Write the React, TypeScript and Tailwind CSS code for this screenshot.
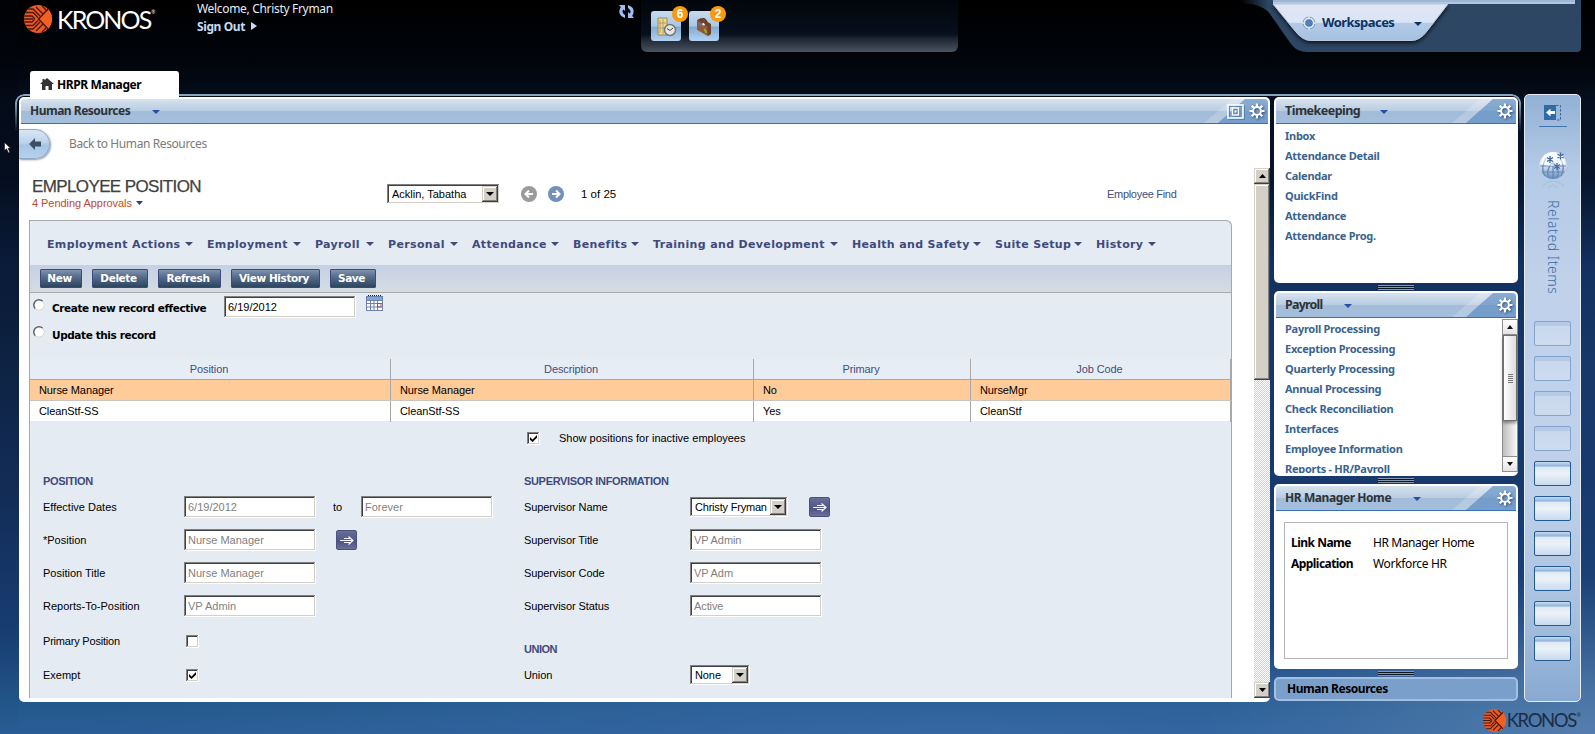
import type { ReactNode } from 'react';

const UI = "font-['Noto_Sans',sans-serif]";

function Caret({ className = '', w = 8, h = 4 }: { className?: string; w?: number; h?: number }) {
  return (
    <svg width={w} height={h} viewBox="0 0 8 4" preserveAspectRatio="none" className={`shrink-0 ${className}`}>
      <path d="M0 0H8L4 4Z" fill="currentColor" />
    </svg>
  );
}

function LogoMark({ size, id }: { size: number; id: string }) {
  return (
    <svg width={size} height={size} viewBox="0 0 28 28" className="shrink-0">
      <defs>
        <clipPath id={id}>
          <circle cx="14" cy="14" r="14" />
        </clipPath>
      </defs>
      <g clipPath={`url(#${id})`}>
        <rect width="28" height="28" fill="#ee5a24" />
        <path
          d="M0 4H9L16 11M0 7.500H9L14 12.500M0 11H8L11 14M0 14H9M0 17H8L11 14M0 20.500H9L14 15.500M0 24H9L16 17M12 2L19 9M12 26L19 19M18 1L22 5M18 27L22 23"
          stroke="#4a180a"
          strokeWidth="1.300"
          fill="none"
        />
        <path d="M14 14L25 3L31 14L25 25Z" fill="#f15f22" />
        <path d="M25 3L14.500 14L25 25" stroke="#4a180a" strokeWidth="1.500" fill="none" />
      </g>
    </svg>
  );
}

function Gear() {
  return (
    <svg width="16" height="16" viewBox="-8 -8 16 16" className="shrink-0 drop-shadow-[1px_1px_1px_rgba(30,60,100,0.8)]">
      <circle r="3.900" fill="none" stroke="#fff" strokeWidth="2" />
      <path
        d="M0 -4.500V-7.500M0 4.500V7.500M-4.500 0H-7.500M4.500 0H7.500M3.200 -3.200L5.300 -5.300M-3.200 3.200L-5.300 5.300M-3.200 -3.200L-5.300 -5.300M3.200 3.200L5.300 5.300"
        stroke="#fff"
        strokeWidth="2.200"
      />
    </svg>
  );
}

function PanelHeader({ title, children }: { title: ReactNode; children: ReactNode }) {
  return (
    <div className="relative mx-[2px] mt-[2px] flex h-[25px] shrink-0 items-center overflow-hidden rounded-t-[4px] border-b border-[#3b70b0] bg-[linear-gradient(180deg,#d6e2ee_0%,#b9cde2_48%,#a2bcd9_52%,#a4bfdc_100%)] pr-[3px]">
      <svg width="66" height="24" className="absolute top-0 right-0">
        <path d="M2 24L30 0H43L16 24Z" fill="#fff" opacity=".2" />
        <path d="M16 24L43 0H66V24Z" fill="#5b8bc0" opacity=".62" />
      </svg>
      <span className={`${UI} relative flex items-center text-[12px] leading-[24px] font-bold whitespace-nowrap text-[#2d3338]`}>
        {title}
      </span>
      <Caret className="relative mt-[2px] text-[#2350a0]" />
      <div className="relative ml-auto flex items-center gap-[5px]">{children}</div>
    </div>
  );
}

const SUNK =
  'bg-white shadow-[inset_-1px_-1px_0_#fff,inset_1px_1px_0_#808080,inset_-2px_-2px_0_#d4d0c8,inset_2px_2px_0_#404040]';
const RAISED =
  'bg-[#d4d0c8] shadow-[inset_-1px_-1px_0_#404040,inset_1px_1px_0_#d4d0c8,inset_-2px_-2px_0_#808080,inset_2px_2px_0_#fff]';

function Field({ value, className = '' }: { value: string; className?: string }) {
  return <div className={`${SUNK} h-[22px] w-[132px] shrink-0 pl-[4px] leading-[22px] ${className}`}>{value}</div>;
}

function Select({ value, className }: { value: string; className: string }) {
  return (
    <div className={`${SUNK} flex h-[20px] shrink-0 items-center p-[2px] pl-[5px] text-black ${className}`}>
      <span className="leading-[20px] whitespace-nowrap">{value}</span>
      <span className={`${RAISED} ml-auto flex h-[16px] w-[16px] shrink-0 items-center justify-center`}>
        <Caret />
      </span>
    </div>
  );
}

function Check({ on }: { on?: boolean }) {
  return (
    <span className={`${SUNK} flex h-[13px] w-[13px] shrink-0 items-center justify-center`}>
      {on && (
        <svg width="7" height="7" viewBox="0 0 7 7">
          <path d="M0 2L2.500 4.500L7 0V2.800L2.500 7L0 4.800Z" fill="#000" />
        </svg>
      )}
    </span>
  );
}

function Radio() {
  return (
    <svg width="12" height="12" viewBox="0 0 12 12" className="shrink-0">
      <circle cx="6" cy="6" r="5.300" fill="#fff" stroke="#fff" />
      <path d="M2.300 9.700A5.200 5.200 0 0 1 9.700 2.300" fill="none" stroke="#606060" strokeWidth="1.500" />
      <path d="M9.700 2.300A5.200 5.200 0 0 1 2.300 9.700" fill="none" stroke="#d4d0c8" />
    </svg>
  );
}

function GoButton({ className = '' }: { className?: string }) {
  return (
    <span
      className={`flex h-[20px] w-[21px] shrink-0 items-center justify-center rounded-[2px] border border-[#4c5280] bg-[linear-gradient(180deg,#686e99,#4f5582_60%,#6a709a)] ${className}`}
    >
      <svg width="14" height="9" viewBox="0 0 14 9" fill="none" stroke="#f4f6ff" strokeWidth="1.200">
        <path d="M0 4.500H13M4 2.500H10M4 6.500H10M8.500 .5L13 4.500L8.500 8.500" />
      </svg>
    </span>
  );
}

const MENU = [
  { label: 'Employment Actions', w: 'w-[160px]', tw: 'w-[138px]' },
  { label: 'Employment', w: 'w-[108px]', tw: 'w-[86px]' },
  { label: 'Payroll', w: 'w-[73px]', tw: 'w-[51px]' },
  { label: 'Personal', w: 'w-[84px]', tw: 'w-[62px]' },
  { label: 'Attendance', w: 'w-[101px]', tw: 'w-[79px]' },
  { label: 'Benefits', w: 'w-[80px]', tw: 'w-[58px]' },
  { label: 'Training and Development', w: 'w-[199px]', tw: 'w-[177px]' },
  { label: 'Health and Safety', w: 'w-[143px]', tw: 'w-[121px]' },
  { label: 'Suite Setup', w: 'w-[101px]', tw: 'w-[79px]' },
  { label: 'History', w: 'w-[74px]', tw: 'w-[52px]' },
];

const ACTIONS = [
  { label: 'New', w: 'w-[42px]' },
  { label: 'Delete', w: 'w-[56px]' },
  { label: 'Refresh', w: 'w-[63px]' },
  { label: 'View History', w: 'w-[89px]' },
  { label: 'Save', w: 'w-[46px]' },
];

function TopBar() {
  return (
    <header className="flex h-[71px] shrink-0">
      <div className="flex w-[197px] items-start pt-[5px] pl-[24px]">
        <LogoMark size={28} id="mark-top" />
        <div className="ml-[5px] flex items-start font-['Lato',sans-serif] text-white">
          <span className="text-[25px] leading-[28px] tracking-[-1.900px]">KRONOS</span>
          <span className="mt-[3px] ml-[1px] text-[5px] leading-[8px]">®</span>
        </div>
      </div>
      <div className={`${UI} w-[422px] text-[12px]`}>
        <div className="h-[18px] leading-[18px] tracking-[-0.320px] text-[#e6ecf4]">Welcome, Christy Fryman</div>
        <div className="flex h-[18px] items-center leading-[18px] font-bold tracking-[-0.400px] text-[#c6dbf5]">
          Sign Out
          <svg width="6" height="8" className="mb-[2px] ml-[6px]">
            <path d="M0 0L6 4L0 8Z" fill="#c6dbf5" />
          </svg>
        </div>
      </div>
      <div className="w-[22px] pt-[5px]">
        <svg width="15" height="13" viewBox="0 0 15 13">
          <path d="M0 0H6V6L4.300 4.500Q2 7.500 6 10V13Q-2.500 10 1.800 2Z" fill="#9fbdf2" />
          <path d="M15 13H9V7L10.700 8.500Q13 5.500 9 3V0Q17.500 3 13.200 11Z" fill="#9fbdf2" />
        </svg>
      </div>
      <div className="flex h-[52px] w-[317px] gap-[8px] rounded-b-[6px] bg-[linear-gradient(180deg,#02050b_0%,#07101d_66%,#1b2430_74%,#4b5360_100%)] pt-[11px] pl-[10px]">
        <DockIcon count="6">
          <path d="M7 7H16V24H7Z" fill="#e8d9a0" stroke="#a08640" />
          <path d="M9 9V22M12 8V23M8 12H15M8 17H15" stroke="#b89b58" />
          <circle cx="19" cy="19" r="5.500" fill="#e6e6e6" stroke="#777" strokeWidth="1.500" />
          <path d="M16 17.500L19 19.500L22 17" stroke="#444" fill="none" />
        </DockIcon>
        <DockIcon count="2">
          <path d="M8 9L12 7L22 13V23L19.500 25L8 18.500Z" fill="#70402a" />
          <path d="M8 9L18.500 15.500V25L8 18.500Z" fill="#945838" />
          <path d="M13 8.500Q15 6 18 11" stroke="#4a2818" strokeWidth="1.200" fill="none" />
          <path d="M10 12.500L12.500 14" stroke="#3f7ad6" strokeWidth="2.200" />
          <path d="M13.500 12.500L15.500 14" stroke="#fff" strokeWidth="1.800" />
          <path d="M15.500 18L17.500 22" stroke="#79b83a" strokeWidth="1.800" />
        </DockIcon>
      </div>
      <div className="relative ml-auto h-[52px] w-[354px]">
        <svg width="354" height="56" className="absolute inset-0">
          <defs>
            <linearGradient id="ws" x1="0" y1="0" x2="0" y2="1">
              <stop offset="0" stopColor="#dfe5f5" />
              <stop offset=".5" stopColor="#dbe5f5" />
              <stop offset=".53" stopColor="#b2cbe7" />
              <stop offset="1" stopColor="#a5c1e1" />
            </linearGradient>
            <linearGradient id="wsb" x1="0" y1="0" x2="1" y2="0">
              <stop offset="0" stopColor="#2d4663" stopOpacity="0" />
              <stop offset=".08" stopColor="#2d4663" />
            </linearGradient>
            <filter id="sh" x="-10%" y="-20%" width="120%" height="160%">
              <feDropShadow dx="0" dy="2" stdDeviation="2" floodColor="#000" floodOpacity=".75" />
            </filter>
          </defs>
          <path d="M0 0H340V48Q340 52 336 52H66Q56 52 50 44L29 14Q22 4 0 3Z" fill="url(#wsb)" />
          <path d="M32 4H207L186 31Q179 40.500 170 40.500H70Q62 40.500 55 32Z" fill="url(#ws)" stroke="#b7c8de" filter="url(#sh)" />
          <path d="M32 0H334V4H32Z" fill="#9fb7d6" />
          <path d="M32 3H334" stroke="#c7d6ea" />
        </svg>
        <div className="relative flex h-[40px] items-center pt-[5px] pl-[61px]">
          <svg width="14" height="14" viewBox="-7 -7 14 14">
            <circle r="6" fill="#dbe6f3" stroke="#7d96b4" />
            <circle r="3.800" fill="#4f7fb4" />
            <path d="M0 -7V-4.500M0 7V4.500M-7 0H-4.500M7 0H4.500" stroke="#dbe6f3" strokeWidth="1.500" />
          </svg>
          <span className={`${UI} ml-[6px] w-[92px] text-[13px] font-bold tracking-[-0.550px] text-[#0d3263]`}>Workspaces</span>
          <Caret className="mt-[2px] text-[#0d3263]" />
        </div>
      </div>
    </header>
  );
}

function DockIcon({ count, children }: { count: string; children: ReactNode }) {
  return (
    <div className="relative h-[30px] w-[30px] rounded-[3px] bg-[linear-gradient(180deg,#c6dbf0_0%,#a9c7e5_50%,#83abd3_54%,#b4d2f0_100%)]">
      <svg width="30" height="30">{children}</svg>
      <span className="absolute -top-[5px] left-[21px] flex h-[16px] w-[16px] items-center justify-center rounded-full bg-[#f9990f] font-['Liberation_Sans',sans-serif] text-[12px] leading-none font-bold text-white">
        {count}
      </span>
    </div>
  );
}

function ColumnHeads() {
  return (
    <div className="grid h-[21px] grid-cols-[361px_363px_217px_260px] border-b border-[#a8a8a8] bg-[#e6edf5] text-center leading-[20px] tracking-[-0.100px] text-[#444d7c]">
      {['Position', 'Description', 'Primary', 'Job Code'].map((h) => (
        <div key={h} className="border-r border-[#a8a8a8] pr-[2px]">
          {h}
        </div>
      ))}
    </div>
  );
}

function Row({ cells, className }: { cells: string[]; className: string }) {
  return (
    <div className={`grid grid-cols-[361px_363px_217px_260px] tracking-[-0.100px] text-black ${className}`}>
      {cells.map((c, i) => (
        <div key={i} className="border-r border-[#a8a8a8] pl-[9px]">
          {c}
        </div>
      ))}
    </div>
  );
}

function FormRow({ label, lw, children }: { label: string; lw: string; children?: ReactNode }) {
  return (
    <div className="flex h-[33px] items-start pt-[5px] text-[#7f7f7f]">
      <span className={`${lw} leading-[22px] text-black`}>{label}</span>
      {children}
    </div>
  );
}

function MainPanel() {
  return (
    <section className="mt-[3px] ml-[4px] flex h-[605px] w-[1251px] shrink-0 flex-col overflow-hidden rounded-[5px] bg-white">
      <PanelHeader title={<span className="w-[131px] pl-[9px] tracking-[-0.500px]">Human Resources</span>}>
        <svg width="17" height="15" viewBox="0 0 17 15" fill="none" stroke="#fff" className="drop-shadow-[1px_1px_0_#4f79a8]">
          <rect x="1" y="1" width="15" height="13" strokeWidth="1.600" />
          <rect x="5.500" y="4" width="6" height="7" strokeWidth="1.400" />
          <rect x="7.500" y="6.500" width="2" height="2" fill="#fff" stroke="none" />
        </svg>
        <Gear />
      </PanelHeader>
      <div className="flex h-[39px] shrink-0 items-start pt-[5px]">
        <div className="flex h-[30px] w-[31px] items-center rounded-r-full border border-l-0 border-[#8fa9c6] bg-[linear-gradient(180deg,#d9e6f3,#bcd3eb_45%,#a6c5e6_55%,#b7d1ec)] pl-[10px] shadow-[1px_1px_2px_rgba(60,80,110,0.6)]">
          <svg width="12" height="12" viewBox="0 0 12 12">
            <path d="M0 6L6 0V3.500H12V8.500H6V12Z" fill="#3b5068" />
          </svg>
        </div>
        <span className={`${UI} ml-[19px] text-[12px] leading-[30px] tracking-[-0.400px] text-[#7b7b7b]`}>Back to Human Resources</span>
      </div>
      <div className="flex h-[535px] shrink-0">
        <div className="w-[1235px] pl-[10px] font-['Liberation_Sans',sans-serif] text-[11px]">
          <div className="flex h-[57px] pl-[3px]">
            <div className="w-[355px] pt-[14px]">
              <div className="text-[17px] leading-[20px] tracking-[-0.620px] text-[#414141] [-webkit-text-stroke:0.250px_#414141]">EMPLOYEE POSITION</div>
              <div className="flex h-[12px] items-center leading-[12px] text-[#c04a2c]">
                <span className="w-[104px] text-[11px] tracking-[-0.050px] whitespace-nowrap">4 Pending Approvals</span>
                <Caret w={7} className="text-[#2f3f73]" />
              </div>
            </div>
            <div className="mt-[21px] flex h-[20px] w-[720px] items-center text-black">
              <Select value="Acklin, Tabatha" className="w-[113px]" />
              <CircleArrow className="ml-[21px] text-[#9b9b9b]" />
              <CircleArrow className="ml-[11px] rotate-180 text-[#7191b8]" />
              <span className="ml-[17px] pt-[1px] text-[11.500px]">1 of 25</span>
            </div>
            <div className="mt-[21px] leading-[20px] tracking-[-0.300px] text-[#444d7c]">Employee Find</div>
          </div>
          <div className="flex h-[478px] w-[1203px] flex-col overflow-hidden rounded-tr-[6px] border border-b-0 border-[#a8a8a8] bg-[#e4ebf3]">
            <nav className="flex h-[44px] shrink-0 items-center pt-[4px] pl-[17px] font-['DejaVu_Sans',sans-serif] text-[11px] font-bold tracking-[0.350px] text-[#3f4a7c]">
              {MENU.map((m) => (
                <div key={m.label} className={`flex items-center whitespace-nowrap ${m.w}`}>
                  <span className={m.tw}>{m.label}</span>
                  <Caret className="mb-[2px]" />
                </div>
              ))}
            </nav>
            <div className="flex h-[28px] shrink-0 gap-[10px] border-b border-[#a8a8a8] bg-[linear-gradient(180deg,#c5d0e4,#d5dce2)] pt-[4px] pl-[10px]">
              {ACTIONS.map((a) => (
                <div
                  key={a.label}
                  className={`flex h-[19px] items-center justify-center rounded-[1px] border border-[#3c4a7a] bg-[linear-gradient(180deg,#7f93ad_0%,#5a7190_35%,#2c4560_100%)] pr-[3px] font-['DejaVu_Sans',sans-serif] text-[10.500px] font-bold tracking-[-0.400px] whitespace-nowrap text-white ${a.w}`}
                >
                  {a.label}
                </div>
              ))}
            </div>
            <div className="h-[66px] shrink-0 font-['DejaVu_Sans',sans-serif] text-[10.500px] font-bold tracking-[-0.400px] text-black">
              <div className="flex h-[27px] items-start pl-[3px]">
                <div className="pt-[6px]">
                  <Radio />
                </div>
                <span className="ml-[7px] w-[172px] pt-[5px] leading-[20px]">Create new record effective</span>
                <Field value="6/19/2012" className="mt-[3px] font-['Liberation_Sans',sans-serif] text-[11px] font-normal tracking-normal" />
                <svg width="17" height="16" viewBox="0 0 17 16" className="mt-[2px] ml-[10px]">
                  <rect x="0.500" y="1.500" width="16" height="14" fill="#fff" stroke="#6b7fae" />
                  <path d="M1 2H16V5H1Z" fill="#7fa6d8" />
                  <path d="M2 .5H16" stroke="#222" strokeDasharray="1 1" />
                  <path d="M1 5.500H16M1 8.500H16M1 12H16M4.500 5V15M8 5V15M11.500 5V15" stroke="#6f83b0" />
                  <path d="M11.500 8.500H15V12H11.500Z" fill="none" stroke="#b5483c" />
                </svg>
              </div>
              <div className="flex h-[27px] items-start pl-[3px]">
                <div className="pt-[6px]">
                  <Radio />
                </div>
                <span className="ml-[7px] pt-[5px] leading-[20px]">Update this record</span>
              </div>
            </div>
            <div className="shrink-0">
              <ColumnHeads />
              <Row className="h-[21px] border-b border-[#c9c4bd] bg-[#ffcb99] leading-[20px]" cells={['Nurse Manager', 'Nurse Manager', 'No', 'NurseMgr']} />
              <Row className="h-[20px] bg-white leading-[21px]" cells={['CleanStf-SS', 'CleanStf-SS', 'Yes', 'CleanStf']} />
            </div>
            <div className="flex h-[50px] shrink-0 items-start pt-[11px] pl-[497px] leading-[13px] text-black">
              <Check on />
              <span className="ml-[19px]">Show positions for inactive employees</span>
            </div>
            <div className="flex shrink-0 pl-[13px]">
              <div className="w-[481px]">
                <h3 className="h-[20px] leading-[21px] font-bold tracking-[-0.330px] text-[#3f4a7c]">POSITION</h3>
                <FormRow label="Effective Dates" lw="w-[141px]">
                  <Field value="6/19/2012" />
                  <span className="w-[45px] pl-[17px] leading-[22px] text-black">to</span>
                  <Field value="Forever" />
                </FormRow>
                <FormRow label="*Position" lw="w-[141px]">
                  <Field value="Nurse Manager" />
                  <GoButton className="mt-[1px] ml-[20px]" />
                </FormRow>
                <FormRow label="Position Title" lw="w-[141px]">
                  <Field value="Nurse Manager" />
                </FormRow>
                <FormRow label="Reports-To-Position" lw="w-[141px]">
                  <Field value="VP Admin" />
                </FormRow>
                <div className="flex h-[36px] items-center">
                  <span className="w-[143px] tracking-[-0.200px] text-black">Primary Position</span>
                  <Check />
                </div>
                <div className="flex h-[32px] items-center">
                  <span className="w-[143px] text-black">Exempt</span>
                  <Check on />
                </div>
              </div>
              <div className="tracking-[-0.100px]">
                <h3 className="h-[20px] leading-[21px] font-bold tracking-[-0.330px] text-[#3f4a7c]">SUPERVISOR INFORMATION</h3>
                <FormRow label="Supervisor Name" lw="w-[166px]">
                  <Select value="Christy Fryman" className="mt-[1px] w-[98px] tracking-[-0.200px]" />
                  <GoButton className="mt-[1px] ml-[21px]" />
                </FormRow>
                <FormRow label="Supervisor Title" lw="w-[166px]">
                  <Field value="VP Admin" />
                </FormRow>
                <FormRow label="Supervisor Code" lw="w-[166px]">
                  <Field value="VP Adm" />
                </FormRow>
                <FormRow label="Supervisor Status" lw="w-[166px]">
                  <Field value="Active" />
                </FormRow>
                <h3 className="h-[36px] pt-[16px] leading-[20px] font-bold tracking-[-0.500px] text-[#3f4a7c]">UNION</h3>
                <div className="flex h-[32px] items-center">
                  <span className="w-[166px] text-black">Union</span>
                  <Select value="None" className="w-[60px]" />
                </div>
              </div>
            </div>
          </div>
        </div>
        <div className="mt-[5px] flex h-[530px] w-[16px] flex-col bg-[repeating-conic-gradient(#d4d0c8_0_25%,#ffffff_0_50%)] bg-[length:2px_2px] text-black">
          <span className={`${RAISED} flex h-[16px] items-center justify-center`}>
            <Caret w={7} className="rotate-180" />
          </span>
          <span className={`${RAISED} h-[196px]`} />
          <span className={`${RAISED} mt-auto flex h-[16px] items-center justify-center`}>
            <Caret w={7} />
          </span>
        </div>
      </div>
    </section>
  );
}

function CircleArrow({ className }: { className: string }) {
  return (
    <svg width="16" height="16" viewBox="0 0 16 16" className={className}>
      <circle cx="8" cy="8" r="8" fill="currentColor" />
      <path d="M12 8H5M8 4.500L4.500 8L8 11.500" stroke="#fff" strokeWidth="2" fill="none" />
    </svg>
  );
}

function Grip() {
  return (
    <div className="mx-auto mt-[2px] mb-[1px] h-[5px] w-[36px] shrink-0 bg-[linear-gradient(180deg,#8a98ac_0_1px,#0c1524_1px_2px,#8a98ac_2px_3px,#0c1524_3px_4px,#8a98ac_4px_5px)]" />
  );
}

function Links({ items }: { items: string[] }) {
  return (
    <ul className={`${UI} pl-[11px] text-[11px] font-bold tracking-[-0.270px] text-[#39648f]`}>
      {items.map((i) => (
        <li key={i} className="h-[20px] leading-[20px] whitespace-nowrap">
          {i}
        </li>
      ))}
    </ul>
  );
}

function SidePanels() {
  return (
    <aside className="mt-[3px] ml-[4px] flex h-[605px] w-[244px] flex-col">
      <section className="h-[186px] shrink-0 overflow-hidden rounded-[5px] bg-white">
        <PanelHeader title={<span className="w-[104px] pl-[9px] text-[12.500px] tracking-[-0.520px]">Timekeeping</span>}>
          <Gear />
        </PanelHeader>
        <div className="pt-[2px]">
          <Links items={['Inbox', 'Attendance Detail', 'Calendar', 'QuickFind', 'Attendance', 'Attendance Prog.']} />
        </div>
      </section>
      <Grip />
      <section className="h-[185px] shrink-0 overflow-hidden rounded-[5px] bg-white">
        <PanelHeader title={<span className="w-[68px] pl-[9px] text-[12.500px] tracking-[-0.800px]">Payroll</span>}>
          <Gear />
        </PanelHeader>
        <div className="flex h-[155px] overflow-hidden pt-[1px]">
          <div className="h-[154px] w-[228px] overflow-hidden">
            <Links
              items={[
                'Payroll Processing',
                'Exception Processing',
                'Quarterly Processing',
                'Annual Processing',
                'Check Reconciliation',
                'Interfaces',
                'Employee Information',
                'Reports - HR/Payroll',
              ]}
            />
          </div>
          <div className="flex h-[153px] w-[16px] flex-col border border-[#8e8e8e] bg-[linear-gradient(90deg,#bdbdbd,#fafafa)] text-[#111]">
            <span className="flex h-[15px] items-center justify-center border-b border-[#8e8e8e] bg-[linear-gradient(180deg,#fff,#e4e4e4)]">
              <Caret w={6} className="rotate-180" />
            </span>
            <span className="flex h-[86px] flex-col items-center justify-center gap-[1px] border border-[#707070] bg-[linear-gradient(90deg,#fff,#dcdcdc)] shadow-[0_2px_3px_rgba(0,0,0,0.4)]">
              {[0, 1, 2, 3, 4].map((i) => (
                <i key={i} className="h-px w-[5px] bg-[#777]" />
              ))}
            </span>
            <span className="mt-auto flex h-[15px] items-center justify-center border-t border-[#8e8e8e] bg-[linear-gradient(180deg,#fff,#e4e4e4)]">
              <Caret w={6} />
            </span>
          </div>
        </div>
      </section>
      <Grip />
      <section className="h-[185px] shrink-0 overflow-hidden rounded-[5px] bg-white">
        <PanelHeader title={<span className="w-[137px] pl-[9px] tracking-[-0.420px]">HR Manager Home</span>}>
          <Gear />
        </PanelHeader>
        <div className={`${UI} mx-[10px] mt-[11px] h-[137px] border border-[#b5b5b5] pt-[9px] pl-[6px] text-[12px] text-black`}>
          <div className="flex h-[21px] leading-[21px]">
            <b className="w-[82px] tracking-[-0.500px]">Link Name</b>
            <span className="tracking-[-0.430px]">HR Manager Home</span>
          </div>
          <div className="flex h-[21px] leading-[21px]">
            <b className="w-[82px] tracking-[-0.550px]">Application</b>
            <span className="tracking-[-0.330px]">Workforce HR</span>
          </div>
        </div>
      </section>
      <Grip />
      <div className={`${UI} h-[24px] shrink-0 rounded-[5px] border-2 border-[#a3bfe2] bg-[#7a9fca] pl-[11px] text-[12px] leading-[20px] font-bold tracking-[-0.450px] text-black`}>
        Human Resources
      </div>
    </aside>
  );
}

function RelatedRail() {
  return (
    <aside className="ml-[3px] flex h-[608px] w-[57px] flex-col items-center rounded-[5px] border border-[#e4edf8] bg-[linear-gradient(180deg,#92b0d6_0%,#b4cae6_12%,#c0d1ea_30%,#bfd1ea_65%,#a8c1df_85%,#88a9d2_100%)]">
      <svg width="18" height="17" viewBox="0 0 18 17" className="mt-[9px]">
        <rect x="0" y="1" width="12" height="15" fill="#2f6ba5" />
        <path d="M12 1.500H16.500V16H12" fill="none" stroke="#2f6ba5" strokeDasharray="2.500 1.500" />
        <path d="M2 8.500L6.500 4.500V7H11V10H6.500V12.500Z" fill="#fff" />
      </svg>
      <div className="mt-[5px] h-px w-[28px] bg-[#3f74ae]" />
      <svg width="30" height="40" viewBox="0 0 30 40" className="mt-[23px]">
        <defs>
          <linearGradient id="gl" x1="0" y1="0" x2="0" y2="1">
            <stop offset="0" stopColor="#fff" />
            <stop offset=".5" stopColor="#dfe8f2" />
            <stop offset="1" stopColor="#5e87b8" />
          </linearGradient>
        </defs>
        <circle cx="15" cy="15.500" r="13.500" fill="url(#gl)" />
        <path
          d="M2 16H28M4 22H26M15 12V29M15 12Q7 20 11 28M15 12Q23 20 19 28M8 8Q2 18 7 26M22 8Q28 18 23 26"
          stroke="#6389b6"
          strokeWidth="1.200"
          fill="none"
        />
        <path d="M3 14Q5 3 15 2Q25 3 27 14Q15 18 3 14" fill="#fff" opacity=".6" />
        <path
          d="M12 6V13M9 7.500L15 11.500M15 7.500L9 11.500M22.500 2.500V9.500M19.500 4L25.500 8M25.500 4L19.500 8M19 13V20M16 14.500L22 18.500M22 14.500L16 18.500"
          stroke="#3c6ba3"
          strokeWidth="1.300"
        />
        <path d="M4 37Q8 31 15 31.500Q22 31 26 37M10 38Q15 32 20 38" stroke="#93afd0" strokeWidth="1.200" fill="none" opacity=".35" />
      </svg>
      <div className={`${UI} mt-[10px] h-[121px] text-[14px] leading-[14px] font-light tracking-[0.550px] whitespace-nowrap text-[#3c6da4] [writing-mode:vertical-rl]`}>
        Related Items
      </div>
      <div className="flex flex-col gap-[10px]">
        {[0, 1, 2, 3, 4, 5, 6, 7, 8, 9].map((i) => (
          <div
            key={i}
            className={`h-[25px] w-[37px] rounded-[2px] border ${
              i < 4
                ? 'border-[#84a4cc] bg-[linear-gradient(180deg,#b4cae6_0_16%,#c9d8ed_20%,#cddbef_100%)]'
                : 'border-[#235a92] bg-[linear-gradient(180deg,#c4dcf5_0%,#8fb2dc_18%,#dfe9f4_22%,#edf2f8_50%,#c8daef_100%)]'
            }`}
          />
        ))}
      </div>
    </aside>
  );
}

export default function App() {
  return (
    <div className="relative flex h-[734px] w-[1595px] flex-col overflow-hidden bg-[radial-gradient(ellipse_900px_90px_at_60%_100%,rgba(62,112,172,0.6),transparent),radial-gradient(ellipse_400px_160px_at_100%_100%,rgba(110,145,185,0.7),transparent),linear-gradient(180deg,#000000_0%,#01040a_8%,#050f1e_14%,#07142a_24%,#123060_36%,#173868_50%,#18396d_66%,#1b447c_86%,#255a8e_97%,#2a5c96_100%)]">
      <div className="pointer-events-none absolute inset-y-0 left-0 w-[19px] bg-[linear-gradient(180deg,rgba(0,5,15,0.3)_0%,rgba(0,5,15,0.5)_40%,rgba(0,5,15,0.3)_60%,rgba(0,20,60,0.1)_90%,transparent)]" />
      <TopBar />
      <div className="relative z-10 flex h-[23px] shrink-0 pl-[30px]">
        <div className="flex h-[27px] w-[149px] items-center rounded-t-[3px] bg-white pl-[10px]">
          <svg width="14" height="12" viewBox="0 0 14 12" className="mb-[1px]">
            <path d="M7 0L14 6H12V12H8.500V8H5.500V12H2V6H0L2.500 3.800V1H4.500V2.200Z" fill="#333" />
          </svg>
          <span className={`${UI} ml-[3px] text-[12px] font-bold tracking-[-0.400px] text-black`}>HRPR Manager</span>
        </div>
      </div>
      <div className="flex h-[608px] shrink-0 pl-[15px]">
        <div className="relative flex w-[1506px] shrink-0">
          <div className="pointer-events-none absolute inset-0 rounded-t-[9px] border-2 border-b-0 border-[#8aa3c0] [mask-image:linear-gradient(180deg,#000_8px,transparent_38px)]" />
          <MainPanel />
          <SidePanels />
        </div>
        <RelatedRail />
      </div>
      <footer className="flex h-[32px] items-center justify-end pt-[4px] pr-[14px]">
        <LogoMark size={23} id="mark-foot" />
        <span className="ml-[1px] font-['Lato',sans-serif] text-[18.500px] leading-[20px] tracking-[-1.400px] text-[#1c2c48]">KRONOS</span>
        <span className="mb-[9px] ml-[1px] text-[5px] text-[#1c2c48]">®</span>
      </footer>
      <svg width="8" height="12" viewBox="0 0 8 12" className="absolute top-[142px] left-[4px]">
        <path d="M.5 .5V8.500L2.500 6.800L4.500 11L5.800 10.300L4 6.300H6.500Z" fill="#fff" stroke="#000" strokeWidth=".5" />
      </svg>
    </div>
  );
}
